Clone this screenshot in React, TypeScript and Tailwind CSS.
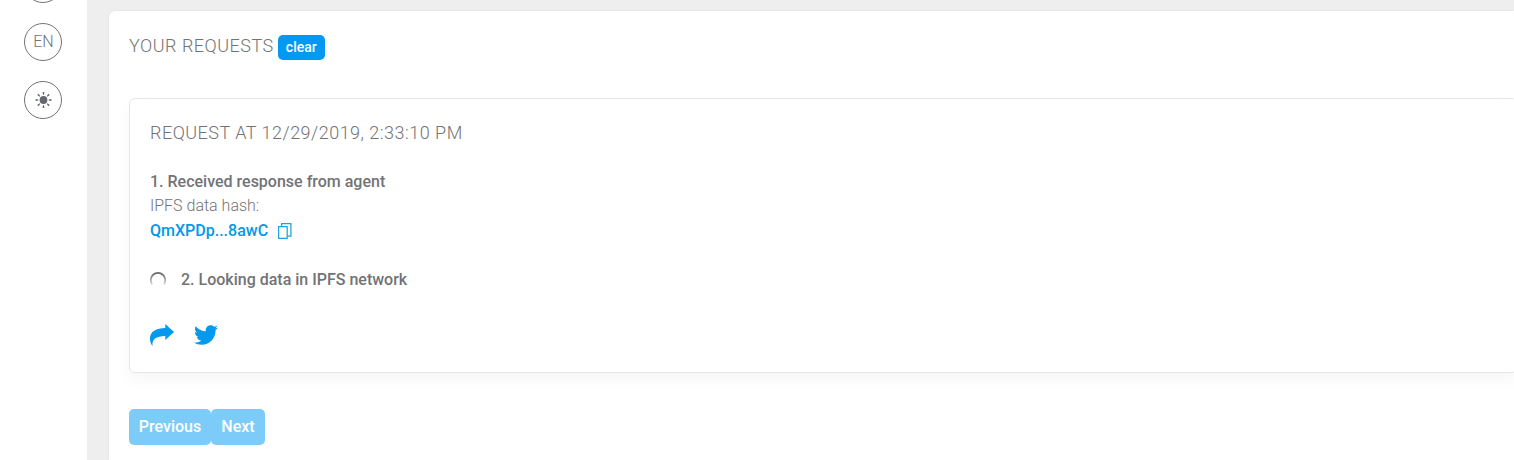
import { FaTwitter } from 'react-icons/fa';

const circleClass =
  'flex h-[38px] w-[38px] shrink-0 items-center justify-center rounded-full border border-[#737377]';

const sunRays = [0, 45, 90, 135, 180, 225, 270, 315];

function SunIcon() {
  return (
    <svg width="17" height="16" viewBox="-.5 0 17 16" fill="#66676b">
      <circle cx="8" cy="8" r="3.9" />
      {sunRays.map((angle) => (
        <path
          key={angle}
          d="M7.1 .1h1.8L8.5 2.8h-1z"
          transform={`rotate(${angle} 8 8)`}
        />
      ))}
    </svg>
  );
}

function CopyIcon() {
  return (
    <svg
      width="14"
      height="16"
      viewBox="0 0 14 16"
      fill="none"
      stroke="#1ba3e0"
      strokeWidth="1.25"
      strokeLinejoin="round"
    >
      <path d="M.6 3.5h8.6v11.9H.6z" />
      <path d="M3.6 3V.6h9.3v12.6H9.6" />
    </svg>
  );
}

function ShareIcon() {
  return (
    <svg width="24" height="22" viewBox="0 0 24 22" fill="#0399ec">
      <path d="M15.3 0v3.9C6.2 3.9 0 7.4 0 14.4c0 3 .9 5.8 2.5 7.6-.6-6.8 3.4-9.8 12.8-9.9V16L24 8z" />
    </svg>
  );
}

function Spinner() {
  return (
    <svg width="16" height="16" viewBox="0 0 16 16" fill="none">
      <defs>
        <linearGradient id="spinner" x1="0" y1="0" x2="0" y2="1">
          <stop offset="0" stopColor="#66676a" />
          <stop offset="1" stopColor="#66676a" stopOpacity="0.25" />
        </linearGradient>
      </defs>
      <path
        d="M2.2 12.4A7.2 7.2 0 1 1 13.8 12.4"
        stroke="url(#spinner)"
        strokeWidth="1.8"
      />
    </svg>
  );
}

function Sidebar() {
  return (
    <aside className="flex w-[87px] shrink-0 flex-col items-center gap-5 bg-white pr-px">
      <div className={`${circleClass} -mt-[35px]`} />
      <div className={circleClass}>
        <span className="ml-px text-base font-light">EN</span>
      </div>
      <div className={circleClass}>
        <SunIcon />
      </div>
    </aside>
  );
}

function RequestCard() {
  return (
    <div className="-mr-1 mt-[38px] h-[275px] rounded-md border border-[#e6e6e6] bg-white px-5 pt-[22px] shadow-[0_8px_16px_rgba(0,0,0,0.035)]">
      <h2 className="text-lg font-light uppercase leading-6 tracking-[0.48px]">
        Request at 12/29/2019, 2:33:10 PM
      </h2>
      <div className="mt-[25px] text-base leading-6">
        <p className="font-medium">1. Received response from agent</p>
        <p className="font-light">IPFS data hash:</p>
        <p className="mt-px flex items-center gap-2.5 font-medium text-[#0399e8]">
          QmXPDp...8awC
          <CopyIcon />
        </p>
      </div>
      <div className="mt-[25px] flex items-center gap-[15px] text-base font-medium leading-6">
        <Spinner />
        2. Looking data in IPFS network
      </div>
      <div className="mt-[31px] flex items-center gap-5">
        <ShareIcon />
        <FaTwitter size={24} color="#0399ec" />
      </div>
    </div>
  );
}

export default function App() {
  return (
    <div className="flex h-[460px] overflow-hidden bg-[#eeeeee] font-['Roboto',sans-serif] text-[#727376]">
      <Sidebar />
      <main className="ml-[22px] mt-[11px] min-w-0 flex-1 rounded-tl-md bg-white pl-5 pt-6 shadow-[0_0_3px_rgba(0,0,0,0.06)]">
        <div className="flex h-[25px] items-center gap-1">
          <h1 className="-mt-[3px] text-lg font-light uppercase leading-6 tracking-[0.5px]">
            Your requests
          </h1>
          <button className="h-[25px] w-[47px] rounded-[5px] bg-[#0399f2] pb-px text-sm font-medium text-white">
            clear
          </button>
        </div>
        <RequestCard />
        <div className="mt-9 flex text-base font-medium text-white">
          <button className="h-9 w-[82px] rounded-[5px] bg-[#7dcbf9]">
            Previous
          </button>
          <button className="h-9 w-[54px] rounded-[5px] bg-[#7dcbf9]">
            Next
          </button>
        </div>
      </main>
    </div>
  );
}
